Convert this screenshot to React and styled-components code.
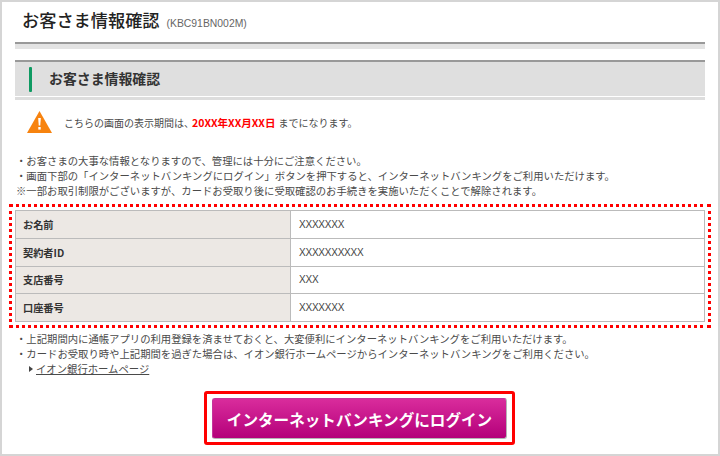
import styled, { createGlobalStyle } from "styled-components";

const GlobalStyle = createGlobalStyle`
  html, body {
    margin: 0;
    padding: 0;
    background: #fff;
  }
  body {
    font-family: "Noto Sans CJK JP", "Noto Sans", sans-serif;
    color: #4a4a4a;
  }
`;

const Page = styled.div`
  box-sizing: border-box;
  width: 720px;
  height: 456px;
  border: 2px solid #d5d5d5;
  padding: 0 13px;
  overflow: hidden;
`;

const Header = styled.header`
  display: flex;
  align-items: baseline;
  gap: 7px;
  height: 40px;
  padding: 6px 0 0 7px;
  box-sizing: border-box;
`;

const Title = styled.h1`
  margin: 0;
  font-size: 17.2px;
  line-height: 24px;
  font-weight: 500;
  color: #222;
`;

const Code = styled.span`
  font-family: "Liberation Sans", sans-serif;
  font-size: 10.4px;
  color: #666;
`;

const Rule = styled.div`
  height: 5px;
  border-top: 2px solid #999;
  background: #e3e3e3;
`;

const SectionHead = styled.h2`
  display: flex;
  align-items: center;
  gap: 17px;
  box-sizing: border-box;
  height: 40px;
  margin: 11px 0 0;
  padding: 0 0 3px 14px;
  border-top: 2px solid #999;
  background: linear-gradient(#dfdfdf 34px, #fff 34px, #fff 35px, #ddd 35px);
  font-size: 13.9px;
  font-weight: 700;
  color: #333;
`;

const SectionTitle = styled.span`
  margin-bottom: 3px;
`;

const GreenBar = styled.span`
  width: 3px;
  height: 25px;
  border-radius: 1px;
  background: #0f9a62;
`;

const Notice = styled.div`
  display: flex;
  align-items: center;
  gap: 12px;
  height: 22px;
  margin: 11px 0 0 12px;
  font-size: 10px;
`;

const Alert = styled.strong`
  margin: 0 3px 0 -2px;
  font-size: 10.5px;
  color: #f00;
`;

const Notes = styled.ul`
  list-style: none;
  margin: ${(p) => p.$top}px 0 0;
  padding: 0;
  font-size: 10.35px;
  line-height: 15px;
`;

const Note = styled.li`
  white-space: nowrap;
  text-indent: 1px;
`;

const Dotted = styled.div`
  margin: 6px -6px 0;
  padding: 3px;
  border: 3px dotted #f00;
`;

const Table = styled.table`
  width: 100%;
  border-collapse: collapse;
  font-size: 10.2px;
  table-layout: fixed;
`;

const Row = styled.tr`
  height: 27.75px;
`;

const Head = styled.th`
  box-sizing: border-box;
  width: 275px;
  padding: 0 7px;
  border: 1px solid #bbb;
  background: #ece8e4;
  text-align: left;
  font-weight: 700;
  color: #333;
`;

const Cell = styled.td`
  padding: 0 8px;
  border: 1px solid #bbb;
  font-family: "Liberation Sans", sans-serif;
  font-size: 10px;
  letter-spacing: -0.23px;
  color: #444;
`;

const LinkLine = styled.a`
  display: flex;
  align-items: center;
  gap: 3px;
  height: 15px;
  margin-left: 14px;
  font-size: 10.35px;
  color: #4a4a4a;
`;

const Arrow = styled.span`
  width: 0;
  height: 0;
  border-left: 4px solid #444;
  border-top: 3px solid transparent;
  border-bottom: 3px solid transparent;
`;

const Underlined = styled.span`
  text-decoration: underline;
`;

const ButtonRow = styled.div`
  display: flex;
  justify-content: center;
  margin-top: 15px;
  padding-right: 1px;
`;

const Highlight = styled.div`
  padding: 4px 5px 3px;
  border: 3px solid #f00;
  border-radius: 3px;
`;

const LoginButton = styled.button`
  display: block;
  width: 295px;
  height: 41px;
  padding: 0;
  border: 1px solid #c9c9c9;
  border-color: #c4359b #b5b5b5 #b5b5b5 #c4359b;
  border-radius: 3px;
  background: linear-gradient(#d92c9c, #b4007a);
  color: #fff;
  font-family: inherit;
  font-size: 15.6px;
  font-weight: 700;
`;

const rows = [
  ["お名前", "XXXXXXX"],
  ["契約者ID", "XXXXXXXXXX"],
  ["支店番号", "XXX"],
  ["口座番号", "XXXXXXX"],
];

const WarningIcon = () => (
  <svg width="25" height="22" viewBox="0 0 25 22">
    <path d="M12.5 0 L25 22 H0 Z" fill="#f7830f" />
    <path d="M11.2 7 H13.8 L13.3 14.5 H11.7 Z" fill="#fff" />
    <rect x="11.3" y="16" width="2.4" height="2.6" fill="#fff" />
  </svg>
);

export default function App() {
  return (
    <>
      <GlobalStyle />
      <Page>
        <Header>
          <Title>お客さま情報確認</Title>
          <Code>(KBC91BN002M)</Code>
        </Header>
        <Rule />
        <SectionHead>
          <GreenBar />
          <SectionTitle>お客さま情報確認</SectionTitle>
        </SectionHead>
        <Notice>
          <WarningIcon />
          <span>
            こちらの画面の表示期間は、<Alert>20XX年XX月XX日</Alert>までになります。
          </span>
        </Notice>
        <Notes $top={20}>
          <Note>・お客さまの大事な情報となりますので、管理には十分にご注意ください。</Note>
          <Note>・画面下部の「インターネットバンキングにログイン」ボタンを押下すると、インターネットバンキングをご利用いただけます。</Note>
          <Note>※一部お取引制限がございますが、カードお受取り後に受取確認のお手続きを実施いただくことで解除されます。</Note>
        </Notes>
        <Dotted>
          <Table>
            <tbody>
              {rows.map(([label, value]) => (
                <Row key={label}>
                  <Head>{label}</Head>
                  <Cell>{value}</Cell>
                </Row>
              ))}
            </tbody>
          </Table>
        </Dotted>
        <Notes $top={3}>
          <Note>・上記期間内に通帳アプリの利用登録を済ませておくと、大変便利にインターネットバンキングをご利用いただけます。</Note>
          <Note>・カードお受取り時や上記期間を過ぎた場合は、イオン銀行ホームページからインターネットバンキングをご利用ください。</Note>
        </Notes>
        <LinkLine>
          <Arrow />
          <Underlined>イオン銀行ホームページ</Underlined>
        </LinkLine>
        <ButtonRow>
          <Highlight>
            <LoginButton>インターネットバンキングにログイン</LoginButton>
          </Highlight>
        </ButtonRow>
      </Page>
    </>
  );
}
